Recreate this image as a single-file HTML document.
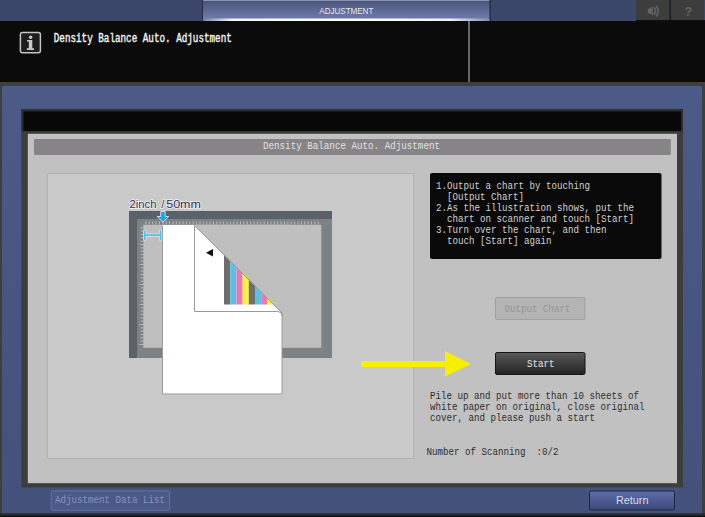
<!DOCTYPE html>
<html><head><meta charset="utf-8">
<style>
html,body{margin:0;padding:0;width:705px;height:517px;overflow:hidden;background:#0b0b0b;}
svg{display:block;}
.m{font-family:"Liberation Mono",monospace;}
.s{font-family:"Liberation Sans",sans-serif;}
</style></head>
<body>
<svg width="705" height="517" viewBox="0 0 705 517">
<defs>
<linearGradient id="tab" x1="0" y1="0" x2="0" y2="1">
<stop offset="0" stop-color="#4a5478"/>
<stop offset="0.8" stop-color="#6a76a6"/>
<stop offset="1" stop-color="#7080b0"/>
</linearGradient>
<linearGradient id="tabhl" x1="0" y1="0" x2="1" y2="0">
<stop offset="0" stop-color="#ffffff" stop-opacity="0"/>
<stop offset="0.1" stop-color="#ffffff" stop-opacity="0.92"/>
<stop offset="0.5" stop-color="#ffffff" stop-opacity="1"/>
<stop offset="0.86" stop-color="#ffffff" stop-opacity="0.9"/>
<stop offset="1" stop-color="#ffffff" stop-opacity="0.1"/>
</linearGradient>
<linearGradient id="startg" x1="0" y1="0" x2="0" y2="1">
<stop offset="0" stop-color="#5a5a5a"/>
<stop offset="1" stop-color="#222222"/>
</linearGradient>
<linearGradient id="retg" x1="0" y1="0" x2="0" y2="1">
<stop offset="0" stop-color="#5d6da6"/>
<stop offset="1" stop-color="#3b4878"/>
</linearGradient>
<linearGradient id="bluebg" x1="0" y1="0" x2="0" y2="1">
<stop offset="0" stop-color="#4b5a87"/>
<stop offset="1" stop-color="#43517b"/>
</linearGradient>
</defs>

<!-- top bar -->
<rect x="0" y="0" width="705" height="21" fill="#3b4769"/>
<rect x="202" y="0" width="288" height="21" fill="#262c44"/>
<rect x="203" y="0" width="287" height="21" fill="url(#tab)"/>
<rect x="203" y="0" width="287" height="1" fill="#8a92b4"/>
<rect x="489.4" y="0" width="1.4" height="21" fill="#262c42"/>
<rect x="203" y="18.5" width="287" height="2.5" fill="url(#tabhl)"/>
<text class="s" x="319.3" y="13.7" font-size="9.6" fill="#e6e8f0" textLength="54" lengthAdjust="spacingAndGlyphs">ADJUSTMENT</text>
<rect x="636" y="0" width="33.4" height="20.2" fill="#3d3d3d"/>
<rect x="671" y="0" width="33" height="20.2" fill="#3d3d3d"/>
<rect x="669.4" y="0" width="1.6" height="20" fill="#181c26"/>
<rect x="636" y="20" width="69" height="1" fill="#0e1014"/>
<!-- speaker -->
<path d="M647.9 9.1 L652.8 7.1 V15 L647.9 12.9 Z" fill="#636363"/>
<path d="M654.3 7.9 Q656.6 11.1 654.3 14.3" stroke="#636363" stroke-width="1.6" fill="none" stroke-linecap="round"/>
<path d="M656.4 6.3 Q659.8 11 656.4 15.8" stroke="#636363" stroke-width="1.6" fill="none" stroke-linecap="round"/>
<text class="s" x="684.3" y="16" font-size="13" font-weight="bold" fill="#636363">?</text>

<!-- black header -->
<rect x="0" y="21" width="705" height="61" fill="#0b0b0b"/>
<rect x="468" y="21" width="2" height="61" fill="#666"/>
<rect x="20.4" y="32.6" width="20" height="20.2" rx="2" fill="#1d1d1d" stroke="#c4c4c4" stroke-width="1.5"/>
<path d="M27 40 H32.3 V48.2 H34 V50 H26.8 V48.2 H28.8 V41.4 H27 Z" fill="#c8c8c8"/>
<circle cx="30.6" cy="37.3" r="1.75" fill="#c8c8c8"/>
<text class="m" x="53.8" y="42" font-size="13.2" fill="#f0f0f0" stroke="#f0f0f0" stroke-width="0.45" textLength="178" lengthAdjust="spacingAndGlyphs">Density Balance Auto. Adjustment</text>

<!-- bands -->
<rect x="0" y="82" width="705" height="435" fill="#3c3f3c"/>
<rect x="0" y="513" width="705" height="2.5" fill="#2c2d2a"/>
<rect x="0" y="515.5" width="705" height="1.5" fill="#0e0e0e"/>
<rect x="2" y="86" width="700" height="427.2" fill="url(#bluebg)"/>

<!-- frame -->
<rect x="21.4" y="109.2" width="661.6" height="378.2" fill="#3b3e3b"/>
<rect x="21.4" y="109.2" width="661.6" height="2.2" fill="#2c2e2c"/>
<rect x="21.4" y="109.2" width="2.1" height="22" fill="#2c2e2c"/>
<rect x="680.9" y="109.2" width="2.1" height="22" fill="#2c2e2c"/>
<rect x="23.4" y="111.3" width="657.6" height="19.8" fill="#080808"/>
<rect x="27.8" y="133.8" width="649.2" height="349.4" fill="#c1c1c1"/>
<rect x="34" y="139" width="636.8" height="15.9" rx="1.3" fill="#868486"/>
<text class="m" x="263" y="149" font-size="11.2" fill="#e2e2e2" textLength="177" lengthAdjust="spacingAndGlyphs">Density Balance Auto. Adjustment</text>

<!-- illustration box -->
<rect x="47.5" y="173.5" width="366" height="285" rx="1" fill="#c9c9c9" stroke="#b2b2b2" stroke-width="1"/>

<!-- scanner -->
<rect x="129" y="211" width="203" height="147" fill="#5b6169"/>
<rect x="137" y="219" width="195" height="139" fill="#7d8285"/>
<rect x="143.3" y="224.8" width="178" height="123" fill="#bfbfbf"/>
<path d="M145.90 221.40v3.20 M149.28 221.40v3.20 M152.66 221.40v3.20 M156.04 221.40v3.20 M159.42 221.40v3.20 M162.80 221.40v3.20 M166.18 221.40v3.20 M169.56 221.40v3.20 M172.94 221.40v3.20 M176.32 221.40v3.20 M179.70 221.40v3.20 M183.08 221.40v3.20 M186.46 221.40v3.20 M189.84 221.40v3.20 M193.22 221.40v3.20 M196.60 221.40v3.20 M199.98 221.40v3.20 M203.36 221.40v3.20 M206.74 221.40v3.20 M210.12 221.40v3.20 M213.50 221.40v3.20 M216.88 221.40v3.20 M220.26 221.40v3.20 M223.64 221.40v3.20 M227.02 221.40v3.20 M230.40 221.40v3.20 M233.78 221.40v3.20 M237.16 221.40v3.20 M240.54 221.40v3.20 M243.92 221.40v3.20 M247.30 221.40v3.20 M250.68 221.40v3.20 M254.06 221.40v3.20 M257.44 221.40v3.20 M260.82 221.40v3.20 M264.20 221.40v3.20 M267.58 221.40v3.20 M270.96 221.40v3.20 M274.34 221.40v3.20 M277.72 221.40v3.20 M281.10 221.40v3.20 M284.48 221.40v3.20 M287.86 221.40v3.20 M291.24 221.40v3.20 M294.62 221.40v3.20 M298.00 221.40v3.20 M301.38 221.40v3.20 M304.76 221.40v3.20 M308.14 221.40v3.20 M311.52 221.40v3.20 M314.90 221.40v3.20 M318.28 221.40v3.20" stroke="#c2c6ca" stroke-width="0.85" fill="none"/>
<path d="M140.60 227.80h2.60 M140.60 231.14h2.60 M140.60 234.47h2.60 M140.60 237.81h2.60 M140.60 241.14h2.60 M139.40 244.48h3.80 M140.60 247.81h2.60 M140.60 251.15h2.60 M140.60 254.48h2.60 M140.60 257.82h2.60 M140.60 261.15h2.60 M139.40 264.49h3.80 M140.60 267.82h2.60 M140.60 271.15h2.60 M140.60 274.49h2.60 M140.60 277.82h2.60 M140.60 281.16h2.60 M139.40 284.49h3.80 M140.60 287.83h2.60 M140.60 291.16h2.60 M140.60 294.50h2.60 M140.60 297.83h2.60 M140.60 301.17h2.60 M139.40 304.50h3.80 M140.60 307.84h2.60 M140.60 311.17h2.60 M140.60 314.51h2.60 M140.60 317.84h2.60 M140.60 321.18h2.60 M139.40 324.51h3.80 M140.60 327.85h2.60 M140.60 331.18h2.60 M140.60 334.52h2.60 M140.60 337.85h2.60 M140.60 341.19h2.60 M139.40 344.52h3.80" stroke="#c2c6ca" stroke-width="0.85" fill="none"/>

<!-- paper -->
<path d="M162.5 225.5 H194.5 L282 313 V394 H162.5 Z" fill="#ffffff" stroke="#9a9a9a" stroke-width="1"/>
<path d="M194.5 225.5 V311.5 H278 Q282 312 282 316" fill="none" stroke="#9a9a9a" stroke-width="1"/>
<path d="M162.5 225.5 H194.5" stroke="#ffffff" stroke-width="1"/>
<!-- color bars -->
<g>
<rect x="224" y="225" width="6.2" height="79.5" fill="#6e6e6e"/>
<rect x="230.2" y="225" width="6.2" height="79.5" fill="#5bc1e3"/>
<rect x="236.4" y="225" width="6.2" height="79.5" fill="#f075b4"/>
<rect x="242.6" y="225" width="6.2" height="79.5" fill="#fff23c"/>
<rect x="248.8" y="225" width="6.2" height="79.5" fill="#6e6e6e"/>
<rect x="255" y="225" width="6.2" height="79.5" fill="#5bc1e3"/>
<rect x="261.2" y="225" width="6.2" height="79.5" fill="#f075b4"/>
<rect x="267.4" y="225" width="6.2" height="79.5" fill="#fff23c"/>
</g>
<path d="M194.5 224.8 L290 320.3 V224.8 Z" fill="#bfbfbf"/>
<path d="M194.5 225.5 L281.5 312.5" stroke="#9a9a9a" stroke-width="1"/>
<path d="M206 252.8 L213 249 V256.6 Z" fill="#111"/>

<!-- 2inch label -->
<g class="s" font-size="10.8" fill="#2e2e58" stroke="#f4f4f4" stroke-width="1.3" paint-order="stroke"><text x="129.5" y="208" textLength="27" lengthAdjust="spacingAndGlyphs">2inch</text><text x="161.2" y="208">/</text><text x="166.2" y="208" textLength="34.8" lengthAdjust="spacingAndGlyphs">50mm</text></g>
<path d="M160.7 211.5 h4.5 v5 h3.5 l-5.75 5.6 l-5.75 -5.6 h3.5 z" fill="#1ea2ea" stroke="#ffffff" stroke-width="0.7"/>
<path d="M144.8 231.2 v8 M160.6 231.2 v8 M144.8 235.2 H160.6" stroke="#eef6fa" stroke-width="3.2" stroke-linecap="round" fill="none" opacity="0.75"/><path d="M144.8 231.2 v8 M160.6 231.2 v8 M144.8 235.2 H160.6" stroke="#4cc2f2" stroke-width="1.8" stroke-linecap="round" fill="none"/>

<!-- arrow -->
<path d="M361 361 H445 V351 L471 364 L445 376.5 V367 H361 Z" fill="#f6f000"/>

<!-- instruction box -->
<rect x="430" y="173" width="231.5" height="86" rx="2" fill="#0a0a0a"/>
<g class="m" font-size="11" fill="#d2d2d2">
<text x="436" y="189" textLength="154" lengthAdjust="spacingAndGlyphs">1.Output a chart by touching</text>
<text x="447" y="200" textLength="77" lengthAdjust="spacingAndGlyphs">[Output Chart]</text>
<text x="436" y="211" textLength="198" lengthAdjust="spacingAndGlyphs">2.As the illustration shows, put the</text>
<text x="447" y="222" textLength="187" lengthAdjust="spacingAndGlyphs">chart on scanner and touch [Start]</text>
<text x="436" y="233" textLength="170.5" lengthAdjust="spacingAndGlyphs">3.Turn over the chart, and then</text>
<text x="447" y="244" textLength="104.5" lengthAdjust="spacingAndGlyphs">touch [Start] again</text>
</g>

<!-- buttons -->
<rect x="495.5" y="297.5" width="89.5" height="22" rx="1.5" fill="#b4b4b4" stroke="#a0a0a0" stroke-width="1"/>
<text class="m" x="504.4" y="311.5" font-size="11" fill="#969696" textLength="66" lengthAdjust="spacingAndGlyphs">Output Chart</text>
<rect x="495.5" y="352.5" width="89.5" height="22" rx="1.5" fill="url(#startg)" stroke="#151515" stroke-width="1"/>
<text class="m" x="527" y="366.6" font-size="11" fill="#e6e6e6" textLength="27.5" lengthAdjust="spacingAndGlyphs">Start</text>

<!-- pile text -->
<g class="m" font-size="10.5" fill="#2e2e2e">
<text x="430" y="399.1" textLength="209" lengthAdjust="spacingAndGlyphs">Pile up and put more than 10 sheets of</text>
<text x="430" y="410.1" textLength="214.5" lengthAdjust="spacingAndGlyphs">white paper on original, close original</text>
<text x="430" y="421.1" textLength="165" lengthAdjust="spacingAndGlyphs">cover, and please push a start</text>
<text x="426.6" y="454.5" textLength="132" lengthAdjust="spacingAndGlyphs">Number of Scanning&#160;&#160;:0/2</text>
</g>

<!-- bottom buttons -->
<rect x="51.2" y="490.8" width="118.4" height="19.4" rx="1.5" fill="#4c5a88" stroke="#6573a3" stroke-width="1"/>
<text class="m" x="55" y="503.3" font-size="10.5" fill="#8592bf" textLength="110" lengthAdjust="spacingAndGlyphs">Adjustment Data List</text>
<rect x="589.5" y="491" width="85" height="19" rx="1.5" fill="url(#retg)" stroke="#1d2440" stroke-width="1"/>
<text class="s" x="616" y="504" font-size="11" fill="#d8dcea" textLength="32.5" lengthAdjust="spacingAndGlyphs">Return</text>
</svg>
</body></html>
